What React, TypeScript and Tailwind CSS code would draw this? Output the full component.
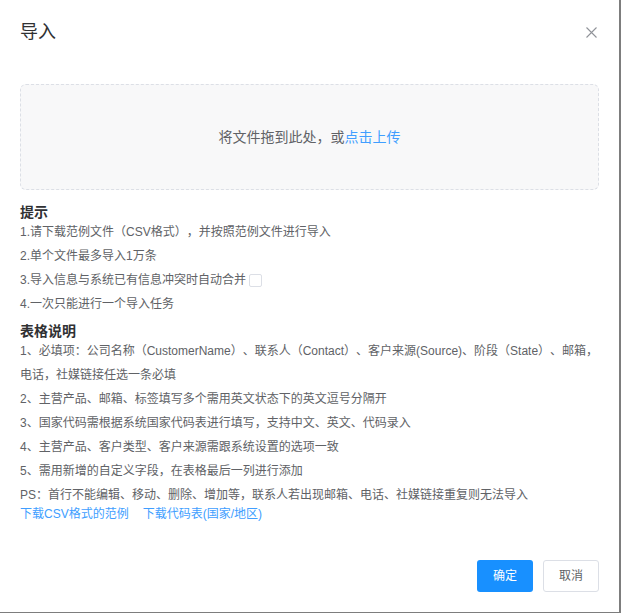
import React from 'react';

const tips = [
  '1.请下载范例文件（CSV格式），并按照范例文件进行导入',
  '2.单个文件最多导入1万条',
];

const notes = [
  '2、主营产品、邮箱、标签填写多个需用英文状态下的英文逗号分隔开',
  '3、国家代码需根据系统国家代码表进行填写，支持中文、英文、代码录入',
  '4、主营产品、客户类型、客户来源需跟系统设置的选项一致',
  '5、需用新增的自定义字段，在表格最后一列进行添加',
  'PS：首行不能编辑、移动、删除、增加等，联系人若出现邮箱、电话、社媒链接重复则无法导入',
];

export default function App() {
  return (
    <div
      className="w-[621px] h-[613px] bg-white border-r-2 border-b border-[#7d7d7d] flex flex-col text-[#606266] [text-spacing-trim:space-all]"
      style={{ fontFamily: '"Liberation Sans", "Noto Sans CJK SC", sans-serif' }}
    >
      {/* Header */}
      <div className="flex items-center justify-between pt-5 pb-2.5 pl-5 pr-[22px]">
        <span className="text-[18px] leading-6 text-[#303133]">导入</span>
        <button className="w-3 h-3 flex items-center justify-center">
          <svg width="11" height="11" viewBox="0 0 11 11">
            <path d="M0.5 0.5L10.5 10.5M10.5 0.5L0.5 10.5" stroke="#909399" strokeWidth="1.1" />
          </svg>
        </button>
      </div>

      {/* Body */}
      <div className="px-5 pt-[30px] flex-1">
        <div className="h-[106px] rounded-md border border-dashed border-[#dcdfe6] bg-[#f8f8f9] flex items-center justify-center text-[14px]">
          <span>
            将文件拖到此处，或<span className="text-[#409eff] cursor-pointer">点击上传</span>
          </span>
        </div>

        <div className="mt-[14px] text-[14px] leading-4 font-bold text-[#303133]">提示</div>
        <div className="text-[12px] leading-6">
          {tips.map((t) => (
            <div key={t}>{t}</div>
          ))}
          <div className="flex items-center">
            <span>3.导入信息与系统已有信息冲突时自动合并</span>
            <span className="ml-[3px] w-[13px] h-[13px] rounded-[2px] border border-[#dcdfe6] bg-white" />
          </div>
          <div>4.一次只能进行一个导入任务</div>
        </div>

        <div className="mt-[7px] text-[14px] leading-4 font-bold text-[#303133]">表格说明</div>
        <div className="text-[12px] leading-6">
          <div className="whitespace-nowrap">
            1、必填项：公司名称（CustomerName）、联系人（Contact）、客户来源(Source)、阶段（State）、邮箱，
          </div>
          <div>电话，社媒链接任选一条必填</div>
          {notes.map((n) => (
            <div key={n}>{n}</div>
          ))}
        </div>
        <div className="flex gap-[14px] text-[12px] leading-[14px] text-[#409eff]">
          <span className="cursor-pointer">下载CSV格式的范例</span>
          <span className="cursor-pointer">下载代码表(国家/地区)</span>
        </div>
      </div>

      {/* Footer */}
      <div className="flex justify-end gap-2.5 px-5 pb-5">
        <button className="h-8 w-14 rounded-[3px] bg-[#1890ff] text-white text-[12px]">确定</button>
        <button className="h-8 w-14 rounded-[3px] border border-[#dcdfe6] bg-white text-[#606266] text-[12px]">
          取消
        </button>
      </div>
    </div>
  );
}
